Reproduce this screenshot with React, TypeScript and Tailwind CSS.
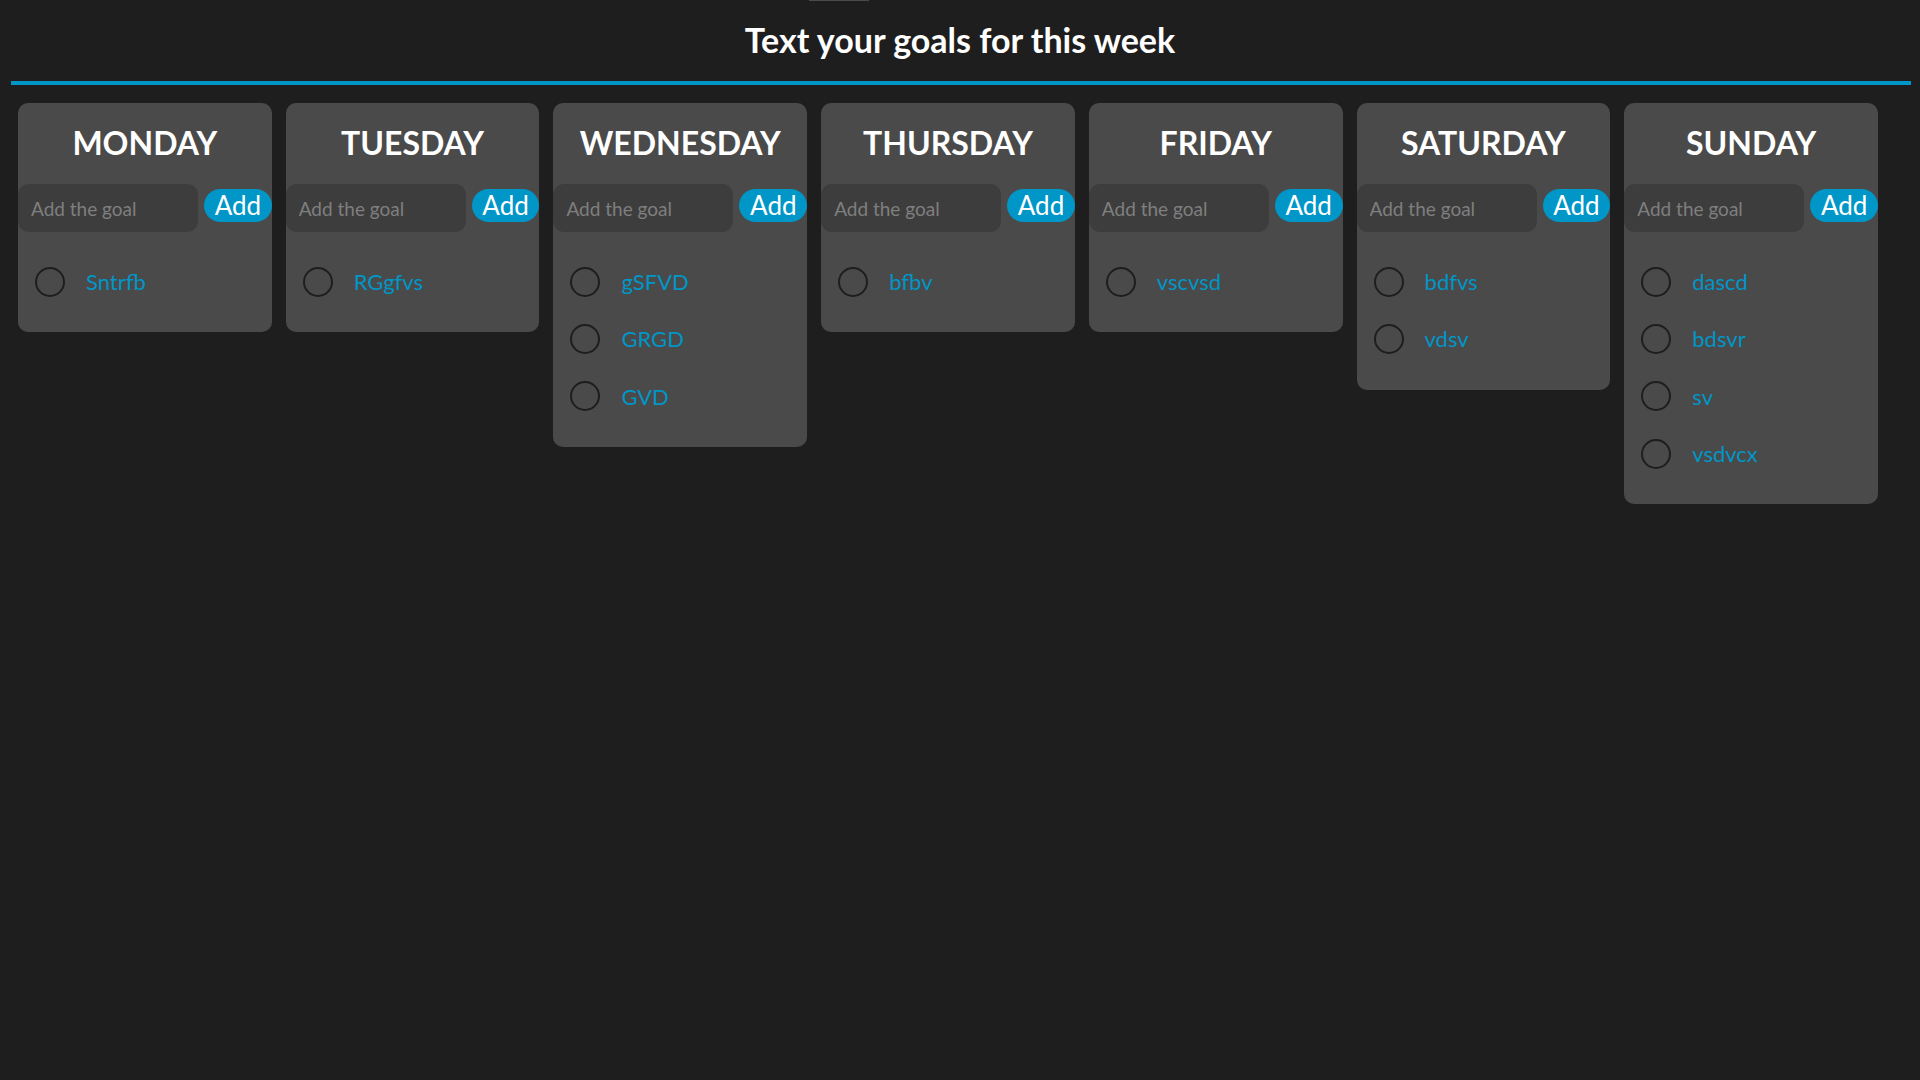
import React from "react";

const days: { name: string; goals: string[] }[] = [
  { name: "MONDAY", goals: ["Sntrfb"] },
  { name: "TUESDAY", goals: ["RGgfvs"] },
  { name: "WEDNESDAY", goals: ["gSFVD", "GRGD", "GVD"] },
  { name: "THURSDAY", goals: ["bfbv"] },
  { name: "FRIDAY", goals: ["vscvsd"] },
  { name: "SATURDAY", goals: ["bdfvs", "vdsv"] },
  { name: "SUNDAY", goals: ["dascd", "bdsvr", "sv", "vsdvcx"] },
];

function DayCard({ name, goals }: { name: string; goals: string[] }) {
  return (
    <div className="flex flex-col rounded-[10px] bg-[#4a4a4a] pt-[20px] pb-[22px]">
      <h2 className="text-center text-[32px] leading-[40px] font-bold text-white">{name}</h2>
      <div className="mt-[21px] flex items-start justify-between gap-[6px]">
        <input
          type="text"
          placeholder="Add the goal"
          className="h-[48px] w-[180px] rounded-[11px] bg-[#3d3d3d] pl-[13px] text-[19px] text-white outline-none placeholder:text-[#7f7f7f]"
        />
        <button className="mt-[5px] h-[33px] flex-1 rounded-full bg-[#0096c7] text-[26px] leading-[33px] text-white">
          Add
        </button>
      </div>
      <ul className="mt-[21px] flex flex-col">
        {goals.map((g) => (
          <li key={g} className="flex h-[57.33px] items-center pl-[17px]">
            <span className="h-[30px] w-[30px] shrink-0 rounded-full border-2 border-[#1e1e1e]" />
            <span className="ml-[21px] text-[22px] text-[#0096c7]">{g}</span>
          </li>
        ))}
      </ul>
    </div>
  );
}

export default function App() {
  return (
    <div className="min-h-screen bg-[#1e1e1e] font-['Lato',sans-serif]">
      <div className="ml-[809px] h-[1px] w-[60px] bg-[#4a4a4a]" />
      <h1 className="mt-[19px] text-center text-[34px] leading-[40px] font-bold text-white">
        Text your goals for this week
      </h1>
      <div className="mt-[21px] ml-[11px] h-[4px] w-[1900px] bg-[#0096c7]" />
      <div className="mt-[18px] ml-[18px] grid w-[1860px] grid-cols-7 items-start gap-[14px]">
        {days.map((d) => (
          <DayCard key={d.name} name={d.name} goals={d.goals} />
        ))}
      </div>
    </div>
  );
}
